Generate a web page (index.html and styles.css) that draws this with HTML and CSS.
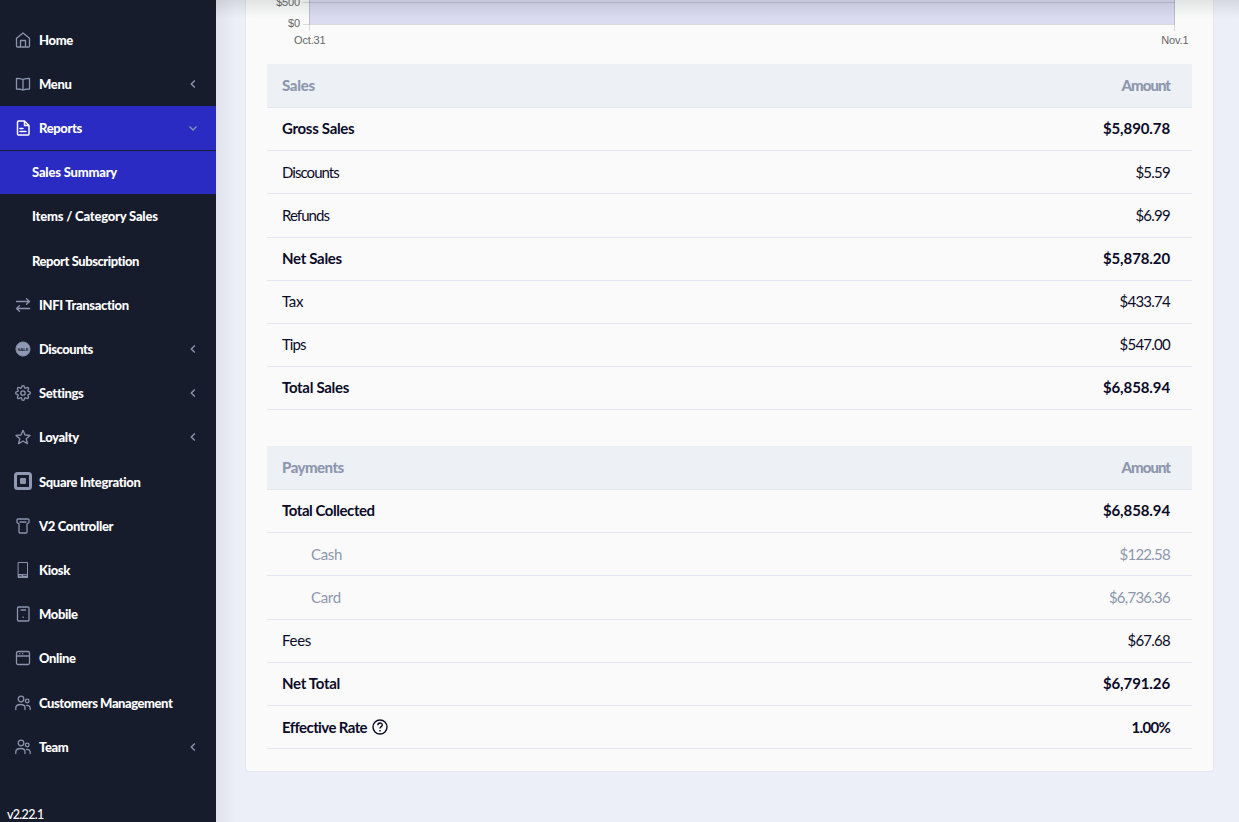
FILE: index.html
```html
<!DOCTYPE html>
<html lang="en">
<head>
    <meta charset="UTF-8">
    <meta name="viewport" content="width=device-width, initial-scale=1.0">
    <title>Sales Summary</title>
    <link rel="stylesheet" href="styles.css">
</head>
<body>
    <div class="layout">
        <aside class="sidebar">
            <ul class="nav">
                <li class="nav-item">
                    <svg class="icon" viewBox="0 0 16 16"><path d="M1.5 6.2 8 1l6.500 5.200V14a1 1 0 0 1-1 1h-11a1 1 0 0 1-1-1zM5.500 15V8.500h5V15"/></svg>
                    <span>Home</span>
                </li>
                <li class="nav-item">
                    <svg class="icon" viewBox="0 0 16 16"><path d="M8 3.500C6 2.500 4 2.300 1.500 2.300V13C4 13 6 13.200 8 14c2-.8 4-1 6.500-1V2.300C12 2.300 10 2.500 8 3.500zV14"/></svg>
                    <span>Menu</span>
                    <svg class="arrow" viewBox="0 0 8 8"><path d="M5.800 .5 2.300 4l3.500 3.500"/></svg>
                </li>
                <li class="nav-item active">
                    <svg class="icon" viewBox="0 0 16 16"><path d="M3.500 1h6L14 5.500V14a1 1 0 0 1-1 1H3.500a1 1 0 0 1-1-1V2a1 1 0 0 1 1-1zM9.500 1v4.500H14M5 8.500h3M5 11.500h6"/></svg>
                    <span>Reports</span>
                    <svg class="arrow" viewBox="0 0 8 8"><path d="M.5 2.500 4 5.900l3.500-3.400"/></svg>
                </li>
                <li class="nav-item sub active"><span class="wide">Sales Summary</span></li>
                <li class="nav-item sub"><span class="wide">Items / Category Sales</span></li>
                <li class="nav-item sub"><span class="tight">Report Subscription</span></li>
                <li class="nav-item">
                    <svg class="icon" viewBox="0 0 16 16"><path d="M1.500 4.500h13M11.500 1.800l3 2.700-3 2.700M14.500 11.500h-13M4.500 8.800l-3 2.700 3 2.700"/></svg>
                    <span>INFI Transaction</span>
                </li>
                <li class="nav-item">
                    <svg class="icon solid" viewBox="0 0 16 16"><circle cx="8" cy="8" r="7" stroke-width="1" stroke-dasharray="1.500 .8"/><text class="sale" x="8" y="9.700">SALE</text></svg>
                    <span class="tight">Discounts</span>
                    <svg class="arrow" viewBox="0 0 8 8"><path d="M5.800 .5 2.300 4l3.500 3.500"/></svg>
                </li>
                <li class="nav-item">
                    <svg class="icon" viewBox="0 0 24 24"><g stroke-width="2"><circle cx="12" cy="12" r="3.300"/><path d="M19.400 15a1.650 1.650 0 0 0 .33 1.820l.06.06a2 2 0 1 1-2.830 2.830l-.06-.06a1.650 1.650 0 0 0-2.800 1.170V21a2 2 0 0 1-4 0v-.09A1.650 1.650 0 0 0 7.100 19.730l-.06.06a2 2 0 1 1-2.830-2.830l.06-.06A1.650 1.650 0 0 0 3.090 14H3a2 2 0 0 1 0-4h.09A1.650 1.650 0 0 0 4.270 7.100l-.06-.06a2 2 0 1 1 2.830-2.830l.06.06A1.650 1.650 0 0 0 10 3.090V3a2 2 0 0 1 4 0v.09a1.650 1.650 0 0 0 2.900 1.180l.06-.06a2 2 0 1 1 2.830 2.830l-.06.06A1.650 1.650 0 0 0 20.910 10H21a2 2 0 0 1 0 4h-.09a1.650 1.650 0 0 0-1.510 1z"/></g></svg>
                    <span>Settings</span>
                    <svg class="arrow" viewBox="0 0 8 8"><path d="M5.800 .5 2.300 4l3.500 3.500"/></svg>
                </li>
                <li class="nav-item">
                    <svg class="icon" viewBox="0 0 16 16"><path d="m8 1.300 2 4.700 5 .4-3.800 3.300 1.200 5L8 12l-4.400 2.700 1.200-5L1 6.400 6 6z"/></svg>
                    <span>Loyalty</span>
                    <svg class="arrow" viewBox="0 0 8 8"><path d="M5.800 .5 2.300 4l3.500 3.500"/></svg>
                </li>
                <li class="nav-item">
                    <svg class="icon square" viewBox="0 0 18 18"><rect x="1.500" y="1.500" width="15" height="15" rx="2" stroke-width="3"/><rect class="fill" x="6" y="6" width="6" height="6" rx="1"/></svg>
                    <span>Square Integration</span>
                </li>
                <li class="nav-item">
                    <svg class="icon" viewBox="0 0 16 16"><path d="M3 1h10a1 1 0 0 1 1 1v2.500L12 6v8a1 1 0 0 1-1 1H5a1 1 0 0 1-1-1V6L2 4.500V2a1 1 0 0 1 1-1zM5 4h6"/></svg>
                    <span>V2 Controller</span>
                </li>
                <li class="nav-item">
                    <svg class="icon" viewBox="0 0 16 16"><rect x="3.500" y=".5" width="9" height="15" stroke-width="1"/><path class="fill" d="M3 12h10v4H3z"/><path class="cut" d="M4.500 13.800h2M8.500 13.300h3"/></svg>
                    <span>Kiosk</span>
                </li>
                <li class="nav-item">
                    <svg class="icon" viewBox="0 0 16 16"><rect x="2.500" y="1" width="11.500" height="14" rx="1"/><path d="M6 4h4.500M8 11.200h.4"/></svg>
                    <span>Mobile</span>
                </li>
                <li class="nav-item">
                    <svg class="icon" viewBox="0 0 16 16"><rect x="1.500" y="1.500" width="13" height="13" rx="1.500"/><path d="M1.500 6h13M4.500 3.700h.3M7.500 3.700h.3"/></svg>
                    <span>Online</span>
                </li>
                <li class="nav-item">
                    <svg class="icon" viewBox="0 0 16 16"><circle cx="6" cy="4" r="2.800"/><circle cx="12.200" cy="6" r="1.800"/><path d="M.8 14.500V13c0-2 2-3.500 5-3.500 2.500 0 4.200 1.500 4.200 3.500v1.500M11.500 10.300c2.300 0 3.700 1 3.700 3v1.200"/></svg>
                    <span class="tight">Customers Management</span>
                </li>
                <li class="nav-item">
                    <svg class="icon" viewBox="0 0 16 16"><circle cx="6" cy="4" r="2.800"/><circle cx="12.200" cy="6" r="1.800"/><path d="M.8 14.500V13c0-2 2-3.500 5-3.500 2.500 0 4.200 1.500 4.200 3.500v1.500M11.500 10.300c2.300 0 3.700 1 3.700 3v1.200"/></svg>
                    <span>Team</span>
                    <svg class="arrow" viewBox="0 0 8 8"><path d="M5.800 .5 2.300 4l3.500 3.500"/></svg>
                </li>
            </ul>
            <div class="version">v2.22.1</div>
        </aside>

        <main class="content">
            <section class="card">
                <svg class="chart" viewBox="0 0 967 64">
                    <rect class="area" x="63" y="0" width="866" height="24"/>
                    <path class="grid" d="M57 2.500h872M57 24.500h872M63.500 0v31M928.500 0v31"/>
                    <text x="54" y="6" text-anchor="end">$500</text>
                    <text x="54" y="27" text-anchor="end">$0</text>
                    <text x="48" y="44">Oct.31</text>
                    <text x="942.500" y="44" text-anchor="end">Nov.1</text>
                </svg>

                <div class="table">
                    <div class="row head"><span>Sales</span><span class="amount">Amount</span></div>
                    <div class="row bold"><span>Gross Sales</span><span class="num">$5,890.78</span></div>
                    <div class="row"><span class="tight">Discounts</span><span class="num">$5.59</span></div>
                    <div class="row"><span class="tight">Refunds</span><span class="num">$6.99</span></div>
                    <div class="row bold"><span>Net Sales</span><span class="num">$5,878.20</span></div>
                    <div class="row"><span>Tax</span><span class="num">$433.74</span></div>
                    <div class="row"><span class="tight">Tips</span><span class="num">$547.00</span></div>
                    <div class="row bold"><span>Total Sales</span><span class="num">$6,858.94</span></div>
                </div>

                <div class="table">
                    <div class="row head"><span class="payments">Payments</span><span class="amount">Amount</span></div>
                    <div class="row bold"><span class="collected">Total Collected</span><span class="num">$6,858.94</span></div>
                    <div class="row child"><span>Cash</span><span class="num">$122.58</span></div>
                    <div class="row child"><span>Card</span><span class="num">$6,736.36</span></div>
                    <div class="row"><span>Fees</span><span class="num">$67.68</span></div>
                    <div class="row bold"><span>Net Total</span><span class="num">$6,791.26</span></div>
                    <div class="row bold rate">
                        <span class="rate-label">Effective Rate
                            <svg class="help" viewBox="0 0 16 16"><circle cx="8" cy="8" r="7"/><path d="M5.800 6.300c0-3 4.500-3 4.500-.2C10.300 7.600 8 7.700 8 9.500M8 11v1.500"/></svg>
                        </span>
                        <span class="num">1.00%</span>
                    </div>
                </div>
            </section>
        </main>
    </div>
</body>
</html>
```

FILE: styles.css
```css
* {
    margin: 0;
    padding: 0;
    box-sizing: border-box;
}

body {
    font-family: Lato, sans-serif;
    background: #eceff8;
    color: #0b0b28;
    overflow: hidden;
}

.layout {
    display: flex;
    height: 822px;
}

/* sidebar */
.sidebar {
    display: flex;
    flex-direction: column;
    flex-shrink: 0;
    width: 216px;
    padding-top: 17.6px;
    background: #171c2d;
    color: #fff;
}

.nav {
    list-style: none;
    flex: 1;
}

.nav-item {
    display: flex;
    align-items: center;
    height: 44.19px;
    padding: 0 19px 0 15px;
    font-size: 13px;
    font-weight: 900;
    letter-spacing: -0.35px;
}

.nav-item.active {
    background: #2a2bc2;
}

.nav-item.sub {
    padding: 0 0 1px 32px;
    border-top: 1px solid #171c2d;
}

.nav-item .wide {
    letter-spacing: -0.2px;
}

.nav-item .tight {
    letter-spacing: -0.45px;
}

.icon {
    width: 16px;
    height: 16px;
    margin-right: 8px;
    fill: none;
    stroke: #8b94ac;
    stroke-width: 1.3;
    stroke-linejoin: round;
    stroke-linecap: round;
    flex-shrink: 0;
}

.active .icon {
    stroke: #fff;
    stroke-width: 1.5;
}

.icon.solid {
    fill: #8f99b3;
}

.icon.square {
    width: 18px;
    height: 18px;
    margin: -2px 7px 0 -1px;
    stroke: #8f99b3;
}

.icon .fill {
    fill: #8b94ac;
    stroke: none;
}

.icon .cut {
    stroke: #171c2d;
    stroke-width: 0.8;
}

.sale {
    font-size: 4.5px;
    font-weight: 900;
    letter-spacing: 0;
    text-anchor: middle;
    fill: #171c2d;
    stroke: none;
}

.arrow {
    width: 8px;
    height: 8px;
    margin-left: auto;
    fill: none;
    stroke: #8b94ac;
    stroke-width: 1.4;
}

.version {
    padding-left: 7px;
    font-size: 12.5px;
    font-weight: 500;
    line-height: 15px;
    letter-spacing: -0.7px;
}

/* content */
.content {
    flex: 1;
    min-width: 0;
    padding: 0 25px 0 29px;
    background:
        linear-gradient(to right, rgba(120, 120, 120, 0.1), rgba(120, 120, 120, 0) 20px),
        #eceff8;
    position: relative;
}

/* shadow cast by the top bar */
.content::before {
    content: "";
    position: absolute;
    top: 0;
    left: 0;
    right: 0;
    height: 18px;
    background: linear-gradient(rgba(60, 70, 70, 0.13), rgba(60, 70, 70, 0));
}

.card {
    padding-bottom: 21.8px;
    border: 1px solid #e4e6f3;
    border-top: 0;
    border-radius: 0 0 3px 3px;
    background: #fafafa;
}

.chart {
    display: block;
    width: 100%;
    height: 64px;
    font-family: "Liberation Sans", Arial, sans-serif;
    font-size: 11px;
    letter-spacing: -0.15px;
    fill: #666;
    overflow: visible;
}

.chart .area {
    fill: #dadaf0;
}

.chart .grid {
    stroke: rgba(0, 0, 0, 0.13);
    fill: none;
}

.table {
    margin: 0 21px;
}

.table + .table {
    margin-top: 35.85px;
}

.row {
    display: flex;
    align-items: center;
    justify-content: space-between;
    height: 43.15px;
    padding: 0 22px 1.5px 15px;
    border-bottom: 1px solid #e4e6f3;
    font-size: 15px;
    letter-spacing: -0.3px;
}

.row .tight {
    letter-spacing: -0.95px;
}

.row .num {
    letter-spacing: -0.75px;
}

.row.head {
    height: 44.15px;
    background: #edf0f5;
    color: #8d97ae;
    font-weight: 900;
    border-bottom-color: #e2e8f0;
}

.row .amount {
    letter-spacing: -1px;
}

.row .payments {
    letter-spacing: -0.55px;
}

.row .collected {
    letter-spacing: -0.45px;
}

.row.bold {
    font-weight: 700;
}

.row.bold .num {
    letter-spacing: -0.1px;
}

.row.child {
    padding-left: 44px;
    color: #8d97ae;
}

.row .rate-label {
    display: flex;
    align-items: center;
    gap: 5px;
    letter-spacing: -0.6px;
}

.row.rate {
    padding-bottom: 0;
}

.row.rate .num {
    letter-spacing: -0.7px;
}

.help {
    width: 16px;
    height: 16px;
    fill: none;
    stroke: #0b0b28;
    stroke-width: 1.4;
}
```
